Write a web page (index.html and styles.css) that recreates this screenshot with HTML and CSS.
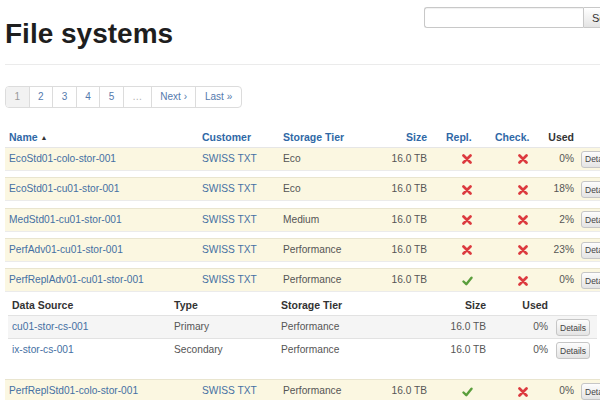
FILE: index.html
```html
<!DOCTYPE html>
<html>
<head>
<meta charset="utf-8">
<link rel="stylesheet" href="styles.css">
</head>
<body>
<div class="header">
  <h1 class="title">File systems</h1>
  <form class="search">
    <input class="search-input" type="text">
    <button class="search-btn" type="button">Search</button>
  </form>
</div>
<hr class="rule">
<ul class="pager">
  <li class="active">1</li>
  <li><a>2</a></li>
  <li><a>3</a></li>
  <li><a>4</a></li>
  <li><a>5</a></li>
  <li class="gap">…</li>
  <li><a>Next ›</a></li>
  <li><a>Last »</a></li>
</ul>

<table class="fs">
  <colgroup>
    <col class="c-name"><col class="c-cust"><col class="c-tier"><col class="c-size"><col class="c-repl"><col class="c-check"><col class="c-used"><col class="c-btn">
  </colgroup>
  <thead>
    <tr>
      <th><a>Name</a> <span class="sort">▲</span></th>
      <th><a>Customer</a></th>
      <th><a>Storage Tier</a></th>
      <th class="num"><a>Size</a></th>
      <th><a>Repl.</a></th>
      <th><a>Check.</a></th>
      <th class="used">Used</th>
      <th></th>
    </tr>
  </thead>
  <tbody>
    <tr class="item"><td><a>EcoStd01-colo-stor-001</a></td><td><a>SWISS TXT</a></td><td>Eco</td><td class="num">16.0 TB</td><td class="ic-repl"><svg class="x" viewBox="0 0 10 10"><path d="M1.5 1.5L8.5 8.5M8.5 1.5L1.5 8.5"/></svg></td><td class="ic-check"><svg class="x" viewBox="0 0 10 10"><path d="M1.5 1.5L8.5 8.5M8.5 1.5L1.5 8.5"/></svg></td><td class="used">0%</td><td class="act"><button class="btn">Details</button></td></tr>
    <tr class="spacer"><td colspan="8"></td></tr>
    <tr class="item"><td><a>EcoStd01-cu01-stor-001</a></td><td><a>SWISS TXT</a></td><td>Eco</td><td class="num">16.0 TB</td><td class="ic-repl"><svg class="x" viewBox="0 0 10 10"><path d="M1.5 1.5L8.5 8.5M8.5 1.5L1.5 8.5"/></svg></td><td class="ic-check"><svg class="x" viewBox="0 0 10 10"><path d="M1.5 1.5L8.5 8.5M8.5 1.5L1.5 8.5"/></svg></td><td class="used">18%</td><td class="act"><button class="btn">Details</button></td></tr>
    <tr class="spacer"><td colspan="8"></td></tr>
    <tr class="item"><td><a>MedStd01-cu01-stor-001</a></td><td><a>SWISS TXT</a></td><td>Medium</td><td class="num">16.0 TB</td><td class="ic-repl"><svg class="x" viewBox="0 0 10 10"><path d="M1.5 1.5L8.5 8.5M8.5 1.5L1.5 8.5"/></svg></td><td class="ic-check"><svg class="x" viewBox="0 0 10 10"><path d="M1.5 1.5L8.5 8.5M8.5 1.5L1.5 8.5"/></svg></td><td class="used">2%</td><td class="act"><button class="btn">Details</button></td></tr>
    <tr class="spacer"><td colspan="8"></td></tr>
    <tr class="item"><td><a>PerfAdv01-cu01-stor-001</a></td><td><a>SWISS TXT</a></td><td>Performance</td><td class="num">16.0 TB</td><td class="ic-repl"><svg class="x" viewBox="0 0 10 10"><path d="M1.5 1.5L8.5 8.5M8.5 1.5L1.5 8.5"/></svg></td><td class="ic-check"><svg class="x" viewBox="0 0 10 10"><path d="M1.5 1.5L8.5 8.5M8.5 1.5L1.5 8.5"/></svg></td><td class="used">23%</td><td class="act"><button class="btn">Details</button></td></tr>
    <tr class="spacer"><td colspan="8"></td></tr>
    <tr class="item"><td><a>PerfReplAdv01-cu01-stor-001</a></td><td><a>SWISS TXT</a></td><td>Performance</td><td class="num">16.0 TB</td><td class="ic-repl"><svg class="ok" viewBox="0 0 11 10"><path d="M1.5 5.5L4.3 8.2L9.5 1.8"/></svg></td><td class="ic-check"><svg class="x" viewBox="0 0 10 10"><path d="M1.5 1.5L8.5 8.5M8.5 1.5L1.5 8.5"/></svg></td><td class="used">0%</td><td class="act"><button class="btn">Details</button></td></tr>
    <tr class="detail">
      <td colspan="8">
        <table class="sub">
          <colgroup>
            <col class="s-ds"><col class="s-type"><col class="s-tier"><col class="s-size"><col class="s-used"><col class="s-btn">
          </colgroup>
          <thead>
            <tr><th>Data Source</th><th>Type</th><th>Storage Tier</th><th class="num">Size</th><th class="num">Used</th><th></th></tr>
          </thead>
          <tbody>
            <tr class="odd"><td><a>cu01-stor-cs-001</a></td><td>Primary</td><td>Performance</td><td class="num">16.0 TB</td><td class="num">0%</td><td><button class="btn">Details</button></td></tr>
            <tr><td><a>ix-stor-cs-001</a></td><td>Secondary</td><td>Performance</td><td class="num">16.0 TB</td><td class="num">0%</td><td><button class="btn">Details</button></td></tr>
          </tbody>
        </table>
      </td>
    </tr>
    <tr class="item"><td><a>PerfReplStd01-colo-stor-001</a></td><td><a>SWISS TXT</a></td><td>Performance</td><td class="num">16.0 TB</td><td class="ic-repl"><svg class="ok" viewBox="0 0 11 10"><path d="M1.5 5.5L4.3 8.2L9.5 1.8"/></svg></td><td class="ic-check"><svg class="x" viewBox="0 0 10 10"><path d="M1.5 1.5L8.5 8.5M8.5 1.5L1.5 8.5"/></svg></td><td class="used">0%</td><td class="act"><button class="btn">Details</button></td></tr>
  </tbody>
</table>
</body>
</html>
```

FILE: styles.css
```css
html {
  overflow: hidden;
}
body {
  margin: 0;
  padding: 0 0 0 5px;
  font-family: "Liberation Sans", Arial, sans-serif;
  color: #555;
  background: #fff;
}
a {
  color: #4570a3;
  text-decoration: none;
  cursor: pointer;
}
.header {
  display: flex;
  justify-content: space-between;
  align-items: flex-start;
}
.title {
  margin: 18px 0 0 0;
  font-size: 28px;
  line-height: 32px;
  font-weight: bold;
  color: #1e1e1e;
}
.search {
  display: flex;
  margin: 7px -33px 0 0;
}
.search-input {
  box-sizing: border-box;
  width: 159px;
  height: 21px;
  margin: 0;
  border: 1px solid #c8c8c8;
  border-right: 0;
  border-radius: 3px 0 0 3px;
  box-shadow: inset 0 1px 1px rgba(0,0,0,0.06);
}
.search-btn {
  box-sizing: border-box;
  width: 50px;
  height: 21px;
  margin: 0;
  padding: 0 0 0 8px;
  text-align: left;
  font-family: "Liberation Sans", Arial, sans-serif;
  font-size: 11px;
  color: #333;
  border: 1px solid #c8c8c8;
  border-radius: 0 3px 3px 0;
  background: linear-gradient(#fff, #e4e4e4);
}
.rule {
  margin: 14px 0 0 0;
  border: 0;
  border-top: 1px solid #ebebeb;
  height: 0;
}
.pager {
  display: inline-flex;
  list-style: none;
  margin: 21px 0 0 0;
  padding: 0;
  border: 1px solid #dcdcdc;
  border-radius: 4px;
  font-size: 10px;
  line-height: 20px;
  overflow: hidden;
}
.pager li {
  padding: 0 8.5px;
  border-left: 1px solid #dcdcdc;
}
.pager li:first-child {
  border-left: 0;
}
.pager li a {
  color: #5479ad;
}
.pager .active {
  background: #f2f2f2;
  color: #999;
}
.pager .gap {
  color: #b0b0b0;
}
.fs {
  margin-top: 20px;
  width: 640px;
  table-layout: fixed;
  border-collapse: collapse;
  font-size: 10.2px;
}
.c-name { width: 193px; }
.c-cust { width: 81px; }
.c-tier { width: 81px; }
.c-size { width: 82px; }
.c-repl { width: 49px; }
.c-check { width: 53px; }
.c-used { width: 34px; }
.c-btn { width: 67px; }
.fs th {
  text-align: left;
  font-size: 10.5px;
  font-weight: bold;
  line-height: 13px;
  padding: 3px 4px;
  border-bottom: 1px solid #e6e6e6;
  white-space: nowrap;
}
.fs th a {
  color: #2f68a6;
}
.sort {
  font-size: 7px;
  color: #333;
  vertical-align: 1px;
}
.fs .num {
  text-align: right;
  padding-right: 15px;
}
.item td {
  background: #fbf7e1;
  border-top: 1px solid #e9e5cf;
  line-height: 22px;
  height: 22px;
  padding: 0 4px;
  white-space: nowrap;
  overflow: hidden;
}
.item td.num {
  padding-right: 15px;
}
.item td.ic-repl {
  padding-left: 20px;
}
.item td.ic-check {
  padding-left: 27px;
}
.item td.used,
.fs th.used {
  color: #555;
  text-align: right;
  padding-right: 4px;
}
.fs th.used {
  color: #333;
}
.item td.act {
  padding-left: 3px;
}
.spacer td {
  height: 6.3px;
  padding: 0;
  border-top: 1px solid #ebebeb;
}
svg {
  display: inline-block;
  vertical-align: middle;
  fill: none;
  stroke-linecap: round;
}
.x {
  width: 10px;
  height: 10px;
  stroke: #dc3a3f;
  stroke-width: 2.7;
}
.ok {
  width: 11px;
  height: 10px;
  stroke: #5a9e3c;
  stroke-width: 2.4;
  stroke-linejoin: round;
}
.btn {
  box-sizing: border-box;
  height: 17px;
  padding: 0 3px;
  margin: 0;
  vertical-align: middle;
  font-family: "Liberation Sans", Arial, sans-serif;
  font-size: 8.5px;
  color: #444;
  border: 1px solid #c6c6c6;
  border-radius: 3px;
  background: linear-gradient(#fdfdfd, #e4e4e4);
}
.detail > td {
  padding: 0 0 18px 3px;
  border-top: 1px solid #ebebeb;
}
.sub {
  width: 589px;
  table-layout: fixed;
  border-collapse: collapse;
  font-size: 10.2px;
}
.s-ds { width: 162px; }
.s-type { width: 107px; }
.s-tier { width: 111px; }
.s-size { width: 102px; }
.s-used { width: 62px; }
.s-btn { width: 45px; }
.sub th {
  text-align: left;
  font-size: 10.5px;
  font-weight: bold;
  color: #333;
  line-height: 14px;
  padding: 6px 4px 3px;
  border-bottom: 1px solid #e2e2e2;
}
.sub td {
  line-height: 22px;
  height: 22px;
  padding: 0 4px;
  white-space: nowrap;
}
.sub tr + tr td {
  border-top: 1px solid #e2e2e2;
}
.sub .num,
.sub th.num {
  text-align: right;
  padding-right: 4px;
}
.sub .odd td {
  background: #f5f5f5;
}
```
